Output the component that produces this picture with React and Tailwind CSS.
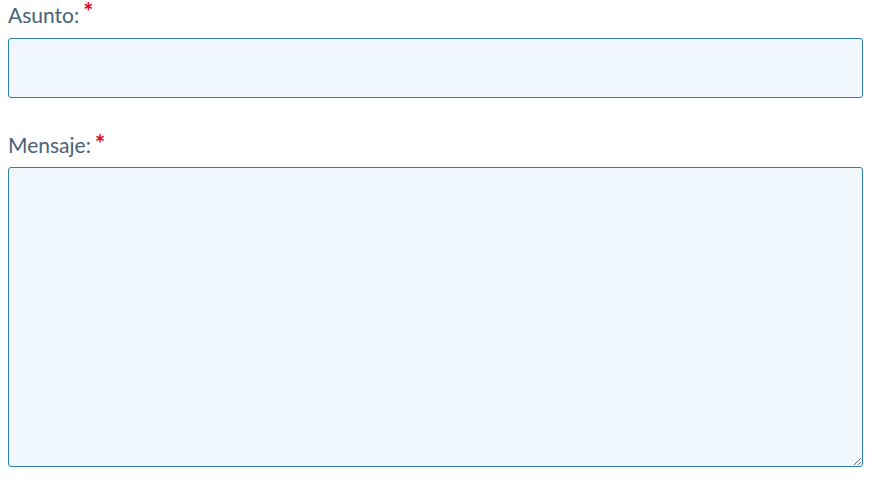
export default function App() {
  return (
    <div className="min-h-[496px] bg-white px-2 font-['Lato',sans-serif] text-[#4a6278]">
      <div className="w-[855px]">
        <label className="flex items-start text-[21px] leading-[30px] mb-2">
          Asunto:
          <span className="ml-[4px] -mt-[3px] text-[24px] font-bold leading-[30px] h-[20px] text-[#e3001b]">*</span>
        </label>
        <input
          type="text"
          className="block w-full h-[60px] rounded-[3px] border border-[#2b7fad] bg-[#f0f7fd] outline-none"
        />

        <label className="flex items-start mt-[32px] text-[21px] leading-[30px] mb-[7px]">
          Mensaje:
          <span className="ml-[4px] -mt-[1px] text-[24px] font-bold leading-[30px] h-[20px] text-[#e3001b]">*</span>
        </label>
        <textarea className="block w-full h-[300px] rounded-[3px] border border-[#2b7fad] bg-[#f0f7fd] outline-none" />
      </div>
    </div>
  )
}
